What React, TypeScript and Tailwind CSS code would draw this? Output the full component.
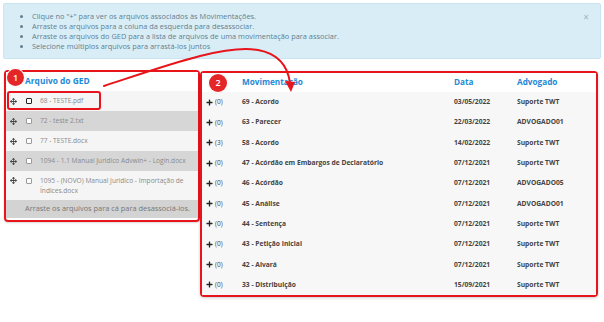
import { FaArrowsAlt, FaPlus } from "react-icons/fa";

type GedFile = { name: string; shade: "light" | "dark"; selected?: boolean };

const files: GedFile[] = [
  { name: "68 - TESTE.pdf", shade: "light", selected: true },
  { name: "72 - teste 2.txt", shade: "dark" },
  { name: "77 - TESTE.docx", shade: "light" },
  { name: "1094 - 1.1 Manual Juridico Advwin+ - Login.docx", shade: "dark" },
];

type Mov = { count: number; title: string; date: string; lawyer: string };

const movs: Mov[] = [
  { count: 0, title: "69 - Acordo", date: "03/05/2022", lawyer: "Suporte TWT" },
  { count: 0, title: "63 - Parecer", date: "22/03/2022", lawyer: "ADVOGADO01" },
  { count: 3, title: "58 - Acordo", date: "14/02/2022", lawyer: "Suporte TWT" },
  { count: 0, title: "47 - Acórdão em Embargos de Declaratório", date: "07/12/2021", lawyer: "Suporte TWT" },
  { count: 0, title: "46 - Acórdão", date: "07/12/2021", lawyer: "ADVOGADO05" },
  { count: 0, title: "45 - Análise", date: "07/12/2021", lawyer: "ADVOGADO01" },
  { count: 0, title: "44 - Sentença", date: "07/12/2021", lawyer: "Suporte TWT" },
  { count: 0, title: "43 - Petição Inicial", date: "07/12/2021", lawyer: "Suporte TWT" },
  { count: 0, title: "42 - Alvará", date: "07/12/2021", lawyer: "Suporte TWT" },
  { count: 0, title: "33 - Distribuição", date: "15/09/2021", lawyer: "Suporte TWT" },
];

const tips = [
  'Clique no "+" para ver os arquivos associados às Movimentações.',
  "Arraste os arquivos para a coluna da esquerda para desassociar.",
  "Arraste os arquivos do GED para a lista de arquivos de uma movimentação para associar.",
  "Selecione múltiplos arquivos para arrastá-los juntos",
];

function Checkbox({ strong }: { strong?: boolean }) {
  return (
    <span
      className={
        strong
          ? "block h-[6px] w-[6px] rounded-[1px] border-[1.5px] border-[#222] bg-white"
          : "block h-[6px] w-[6px] rounded-[1px] border border-[#9a9a9a] bg-white"
      }
    />
  );
}

function Badge({ n, className }: { n: number; className: string }) {
  return (
    <span
      className={`absolute flex items-center justify-center rounded-full bg-[#e42628] text-[9px] font-semibold text-white ring-1 ring-white shadow-[0_0_2px_rgba(0,0,0,0.35)] ${className}`}
    >
      {n}
    </span>
  );
}

export default function App() {
  return (
    <div className="relative h-[322px] w-[604px] overflow-hidden bg-white font-['Open_Sans',sans-serif]">
      {/* alert */}
      <div className="relative mx-[3px] mt-[3px] h-[56px] rounded-[2px] border border-[#c8e5f1] bg-[#d9edf7] text-[#5f7f91]">
        <ul className="list-disc pl-[28px] pt-[7px] text-[7.4px] leading-[10px] marker:text-[#5f7f91]">
          {tips.map((t) => (
            <li key={t}>{t}</li>
          ))}
        </ul>
        <span className="absolute right-[11px] top-[8px] text-[10px] leading-none text-[#9fb3bf]">×</span>
      </div>

      <div className="mt-[11px] flex items-start pl-[4px]">
        {/* GED files */}
        <div className="w-[196px] rounded-[4px] border-2 border-[#e8141b] pb-[2px] shadow-[0_1px_2px_rgba(0,0,0,0.15)]">
          <div className="flex h-[19px] items-center bg-white pl-[19px] text-[8.4px] font-bold text-[#2589d6]">
            Arquivo do GED
          </div>
          {files.map((f) => (
            <div
              key={f.name}
              className={`flex h-[20px] items-center pl-[4px] text-[6.6px] text-[#8a8a8a] ${
                f.shade === "light" ? "bg-[#f5f5f5]" : "bg-[#d6d6d6]"
              }`}
            >
              <FaArrowsAlt className="h-[7px] w-[7px] text-[#444]" />
              <span className="ml-[9px]">
                <Checkbox strong={f.selected} />
              </span>
              <span className="ml-[8px] whitespace-nowrap">{f.name}</span>
            </div>
          ))}
          <div className="flex h-[29px] items-start bg-[#f5f5f5] pl-[4px] pt-[5px] text-[6.6px] leading-[9.5px] text-[#8a8a8a]">
            <FaArrowsAlt className="mt-[1px] h-[7px] w-[7px] text-[#444]" />
            <span className="ml-[9px] mt-[2px]">
              <Checkbox />
            </span>
            <span className="ml-[8px]">
              1095 - (NOVO) Manual Juridico - Importação de
              <br />
              Índices.docx
            </span>
          </div>
          <div className="flex h-[18px] items-center bg-[#d3d3d3] pl-[19px] text-[7.4px] text-[#777]">
            Arraste os arquivos para cá para desassociá-los.
          </div>
        </div>

        {/* movimentacoes */}
        <div className="mt-[1px] w-[398px] rounded-[4px] border-2 border-[#e8141b] shadow-[0_1px_3px_rgba(0,0,0,0.2)]">
          <div className="grid h-[19px] grid-cols-[40px_212px_63px_1fr] items-center bg-white text-[8.2px] font-bold text-[#2589d6]">
            <span />
            <span>Movimentação</span>
            <span>Data</span>
            <span>Advogado</span>
          </div>
          {movs.map((m) => (
            <div
              key={m.title}
              className="grid h-[20.3px] grid-cols-[40px_212px_63px_1fr] items-center bg-[#f7f7f7] text-[6.7px] font-bold text-[#444]"
            >
              <span className="flex items-center pl-[4px]">
                <FaPlus className="h-[7px] w-[7px] text-[#222]" />
                <span className="ml-[2px] text-[6.5px] font-normal text-[#444]">({m.count})</span>
              </span>
              <span className="whitespace-nowrap">{m.title}</span>
              <span>{m.date}</span>
              <span>{m.lawyer}</span>
            </div>
          ))}
        </div>
      </div>

      {/* annotations */}
      <div className="absolute left-[7px] top-[91px] h-[19px] w-[94px] rounded-[3px] border-2 border-[#e8141b]" />
      <Badge n={1} className="left-[7px] top-[69px] h-[17px] w-[17px]" />
      <Badge n={2} className="left-[209px] top-[74px] h-[18px] w-[18px]" />
      <svg className="pointer-events-none absolute left-0 top-0" width="604" height="322" viewBox="0 0 604 322">
        <path
          d="M104 86 C 165 66, 225 44, 258 50 C 280 54, 288 68, 290 83"
          fill="none"
          stroke="#e8141b"
          strokeWidth="2"
          strokeLinecap="round"
        />
        <polygon points="285,81 295,82 291,92" fill="#e8141b" />
      </svg>
    </div>
  );
}
